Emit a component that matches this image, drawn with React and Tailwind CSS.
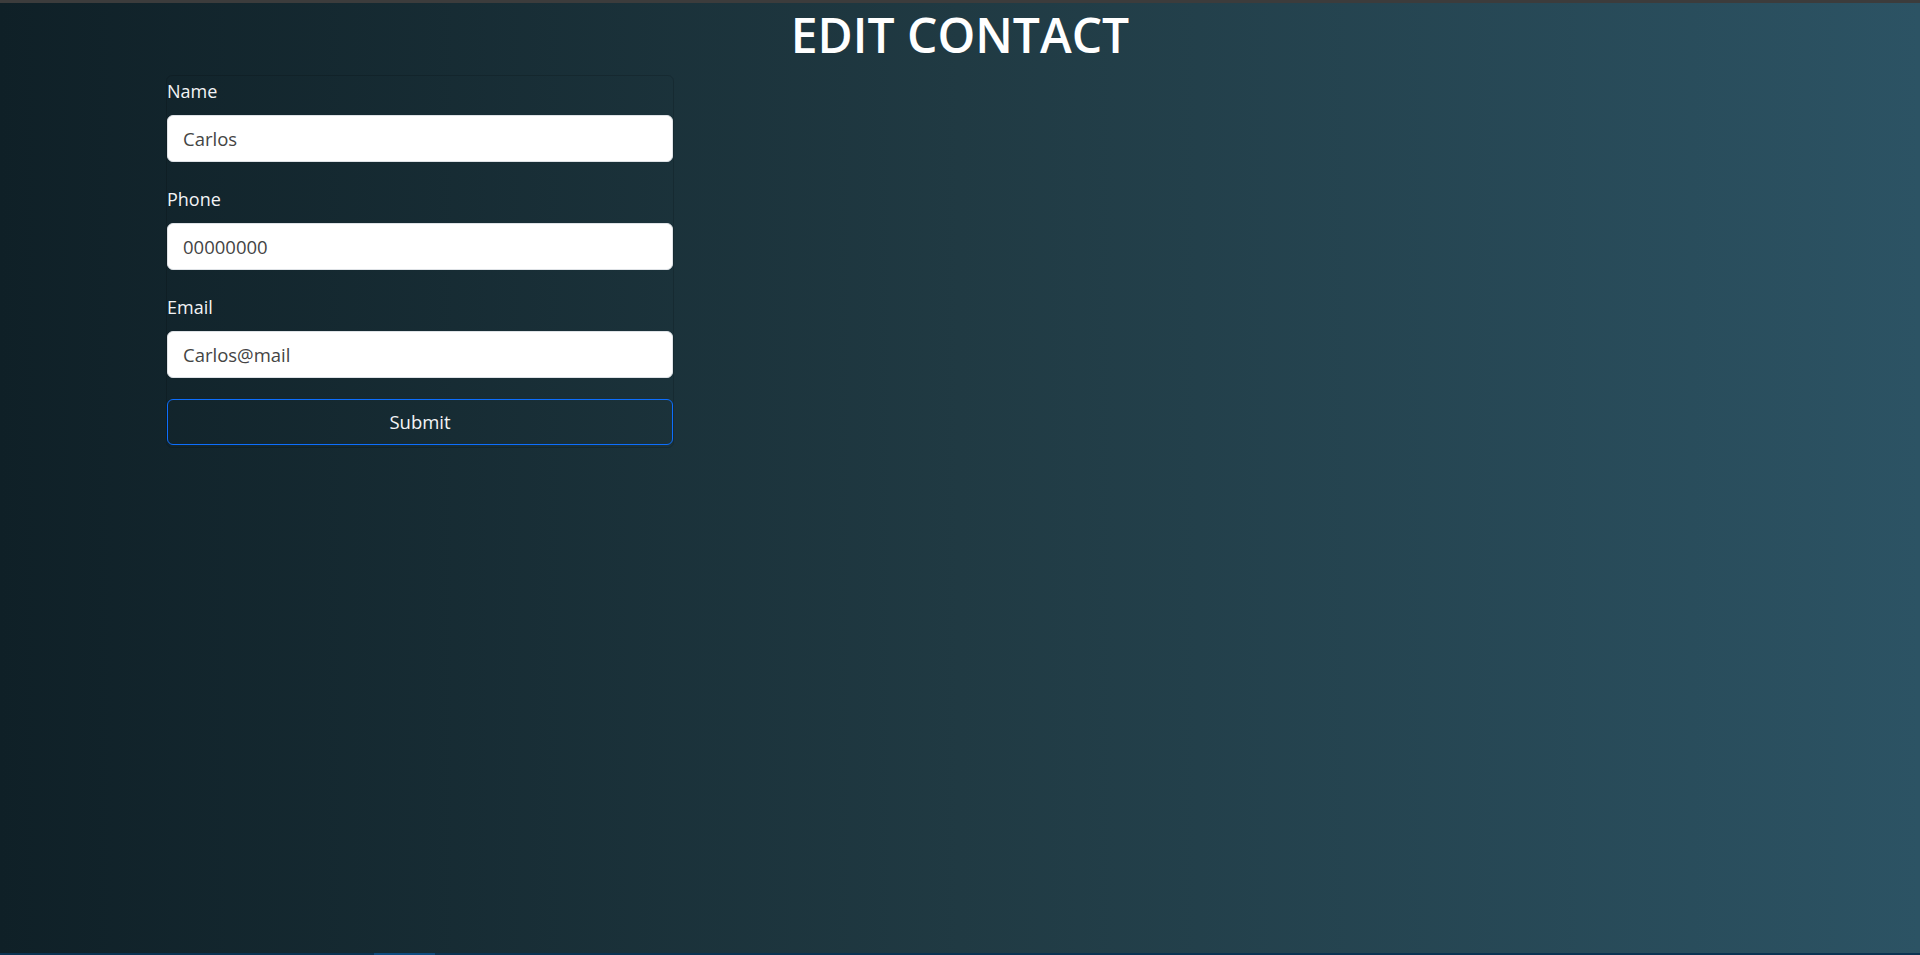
const fields = [
  { label: "Name", value: "Carlos" },
  { label: "Phone", value: "00000000" },
  { label: "Email", value: "Carlos@mail" },
];

export default function App() {
  return (
    <div className="flex h-[955px] flex-col bg-linear-to-r from-[#0f2027] via-[#203a43] to-[#2c5364] font-['Open_Sans',sans-serif]">
      {/* top chrome line */}
      <div className="h-[3px] bg-[#3c3c3c]" />

      <h1 className="mt-[3px] text-center text-[48px] font-semibold leading-[58px] text-white">
        EDIT CONTACT
      </h1>

      <form className="mt-[11px] ml-[166px] w-[508px] rounded-md border border-black/15 pb-[2px]">
        {fields.map((field) => (
          <div key={field.label} className="mb-[22px]">
            <label className="block text-[18px] leading-[30px] text-[#f3f4f6]">
              {field.label}
            </label>
            <input
              type="text"
              defaultValue={field.value}
              className="mt-[9px] block h-[47px] w-full rounded-md border border-[#dee2e6] bg-white px-[15px] text-[18.5px] text-[#444]"
            />
          </div>
        ))}
        <button
          type="button"
          className="-mt-[1px] block h-[46px] w-full rounded-md border border-[#0d6efd] text-[18.5px] text-[#f3f4f6]"
        >
          Submit
        </button>
      </form>

      <div className="flex-1" />

      {/* bottom scroll strip */}
      <div className="flex h-[2px] bg-[#0b3352]">
        <div className="ml-[374px] w-[61px] bg-[#0f4c80]" />
      </div>
    </div>
  );
}
